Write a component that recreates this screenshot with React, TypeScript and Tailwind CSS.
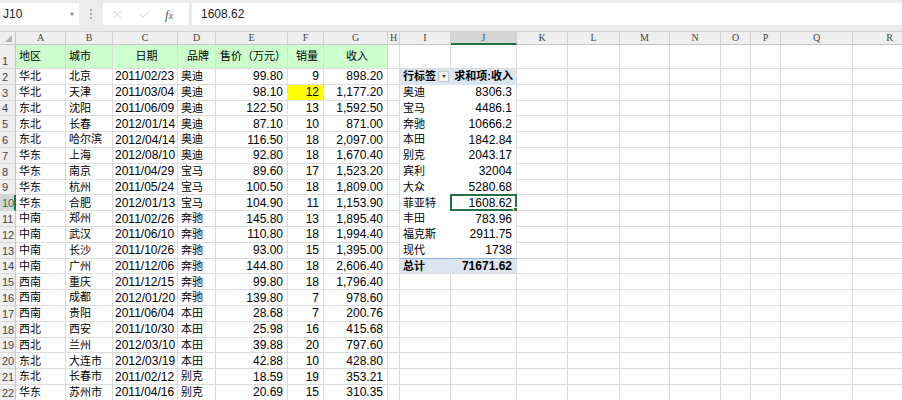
import React from 'react';
import { X, Check } from 'lucide-react';

const COLS = [16, 50, 47, 65, 38, 72, 36, 64, 12, 51, 66, 51, 52, 50, 51, 30, 30, 72, 74];
const LETTERS = ['', 'A', 'B', 'C', 'D', 'E', 'F', 'G', 'H', 'I', 'J', 'K', 'L', 'M', 'N', 'O', 'P', 'Q', 'R'];

const DATA: [string, string, string, string, string, string, string][] = [
    ['华北', '北京', '2011/02/23', '奥迪', '99.80', '9', '898.20'],
    ['华北', '天津', '2011/03/04', '奥迪', '98.10', '12', '1,177.20'],
    ['东北', '沈阳', '2011/06/09', '奥迪', '122.50', '13', '1,592.50'],
    ['东北', '长春', '2012/01/14', '奥迪', '87.10', '10', '871.00'],
    ['东北', '哈尔滨', '2012/04/14', '奥迪', '116.50', '18', '2,097.00'],
    ['华东', '上海', '2012/08/10', '奥迪', '92.80', '18', '1,670.40'],
    ['华东', '南京', '2011/04/29', '宝马', '89.60', '17', '1,523.20'],
    ['华东', '杭州', '2011/05/24', '宝马', '100.50', '18', '1,809.00'],
    ['华东', '合肥', '2012/01/13', '宝马', '104.90', '11', '1,153.90'],
    ['中南', '郑州', '2011/02/26', '奔驰', '145.80', '13', '1,895.40'],
    ['中南', '武汉', '2011/06/10', '奔驰', '110.80', '18', '1,994.40'],
    ['中南', '长沙', '2011/10/26', '奔驰', '93.00', '15', '1,395.00'],
    ['中南', '广州', '2011/12/06', '奔驰', '144.80', '18', '2,606.40'],
    ['西南', '重庆', '2011/12/15', '奔驰', '99.80', '18', '1,796.40'],
    ['西南', '成都', '2012/01/20', '奔驰', '139.80', '7', '978.60'],
    ['西南', '贵阳', '2011/06/04', '本田', '28.68', '7', '200.76'],
    ['西北', '西安', '2011/10/30', '本田', '25.98', '16', '415.68'],
    ['西北', '兰州', '2012/03/10', '本田', '39.88', '20', '797.60'],
    ['东北', '大连市', '2012/03/19', '本田', '42.88', '10', '428.80'],
    ['东北', '长春市', '2011/02/12', '别克', '18.59', '19', '353.21'],
    ['华东', '苏州市', '2011/04/16', '别克', '20.69', '15', '310.35'],
];

const PIVOT: [string, string][] = [
    ['奥迪', '8306.3'],
    ['宝马', '4486.1'],
    ['奔驰', '10666.2'],
    ['本田', '1842.84'],
    ['别克', '2043.17'],
    ['宾利', '32004'],
    ['大众', '5280.68'],
    ['菲亚特', '1608.62'],
    ['丰田', '783.96'],
    ['福克斯', '2911.75'],
    ['现代', '1738'],
];

const HEADERS = ['地区', '城市', '日期', '品牌', '售价（万元）', '销量', '收入'];
const HEADER_ALIGN = ['left', 'left', 'center', 'center', 'center', 'center', 'center'];

type CellProps = {
    width: number;
    children?: React.ReactNode;
    className?: string;
};

const Cell: React.FC<CellProps> = ({ width, children, className = '' }) => (
    <div
        style={{ width }}
        className={`relative shrink-0 h-full flex items-center overflow-visible whitespace-nowrap border-r border-b border-[#dcdcdc] ${className}`}
    >
        {children}
    </div>
);

const cjk = 'text-[11px]';
const num = 'text-[12px] justify-end pr-[4px]';

function renderDataCell(row: number, col: number, w: number) {
    // col 1..7 -> A..G
    if (row === 1) {
        const align = HEADER_ALIGN[col - 1];
        return (
            <Cell
                key={col}
                width={w}
                className={`bg-[#ccffcc] ${cjk} pl-[3px] ${align === 'center' ? 'justify-center' : ''}`}
            >
                {HEADERS[col - 1]}
            </Cell>
        );
    }
    const d = DATA[row - 2];
    const v = d[col - 1];
    if (col === 1 || col === 2 || col === 4) {
        return (
            <Cell key={col} width={w} className={`${cjk} pl-[3px]`}>
                {v}
            </Cell>
        );
    }
    if (col === 3) {
        return (
            <Cell key={col} width={w} className="text-[12px] pl-[2px]">
                {v}
            </Cell>
        );
    }
    const yellow = row === 3 && col === 6 ? 'bg-[#ffff00]' : '';
    return (
        <Cell key={col} width={w} className={`${num} ${yellow}`}>
            {v}
        </Cell>
    );
}

function renderPivotCell(row: number, col: number, w: number) {
    // col 9 = I, col 10 = J
    const isI = col === 9;
    if (row === 2) {
        return (
            <Cell
                key={col}
                width={w}
                className={`bg-[#dce6f1] font-bold border-b-[#dce6f1] ${isI ? 'border-r-[#dce6f1] ' + cjk + ' pl-[3px]' : cjk + ' justify-end pr-[3px]'}`}
            >
                {isI ? (
                    <>
                        <span>行标签</span>
                        <span className="absolute right-[1px] top-[2px] w-[11px] h-[11px] bg-[#f4f4f4] border border-[#c8c8c8] flex items-center justify-center">
                            <span className="w-0 h-0 border-l-[2.5px] border-r-[2.5px] border-t-[3px] border-l-transparent border-r-transparent border-t-[#444]" />
                        </span>
                    </>
                ) : (
                    '求和项:收入'
                )}
            </Cell>
        );
    }
    if (row >= 3 && row <= 13) {
        const p = PIVOT[row - 3];
        const last = row === 13;
        return (
            <Cell
                key={col}
                width={w}
                className={`${last ? 'border-b-[#95b3d7]' : 'border-b-white'} ${isI ? 'border-r-white ' + cjk + ' pl-[3px]' : num + ' pr-[3px]'}`}
            >
                {isI ? p[0] : p[1]}
                {row === 10 && !isI && (
                    <span className="absolute -left-[1px] -top-[1px] -right-[1px] -bottom-[1px] border-2 border-[#217346] pointer-events-none">
                        <span className="absolute -right-[3px] -bottom-[3px] w-[5px] h-[5px] bg-[#217346] border border-white" />
                    </span>
                )}
            </Cell>
        );
    }
    if (row === 14) {
        return (
            <Cell
                key={col}
                width={w}
                className={`bg-[#dce6f1] font-bold ${isI ? 'border-r-[#dce6f1] ' + cjk + ' pl-[3px]' : num + ' pr-[3px]'}`}
            >
                {isI ? '总计' : '71671.62'}
            </Cell>
        );
    }
    return <Cell key={col} width={w} />;
}

const Row: React.FC<{ row: number }> = ({ row }) => {
    const h = row === 1 ? 'h-[24px]' : 'h-[15.8px]';
    const selected = row === 10;
    return (
        <div className={`flex ${h}`}>
            {COLS.map((w, c) => {
                if (c === 0) {
                    return (
                        <div
                            key={c}
                            style={{ width: w }}
                            className={`shrink-0 h-full flex items-end pb-[1px] pl-[2px] text-[11px] leading-none border-b border-[#d8d8d8] ${
                                selected
                                    ? 'bg-[#d6d6d6] text-[#217346] border-r-2 border-r-[#217346]'
                                    : 'bg-[#efefef] text-[#444] border-r border-r-[#c6c6c6]'
                            }`}
                        >
                            {row}
                        </div>
                    );
                }
                if (c >= 1 && c <= 7) return renderDataCell(row, c, w);
                if ((c === 9 || c === 10) && row >= 2 && row <= 14) return renderPivotCell(row, c, w);
                return <Cell key={c} width={w} />;
            })}
        </div>
    );
};

const App: React.FC = () => {
    const rows = Array.from({ length: 22 }, (_, i) => i + 1);
    return (
        <div
            className="w-[902px] h-[400px] overflow-hidden bg-white text-black"
            style={{ fontFamily: '"Liberation Sans", "Noto Sans CJK SC", sans-serif' }}
        >
            {/* formula bar */}
            <div className="h-[32px] bg-[#ececec] flex items-start pt-[3px] gap-0 border-b border-[#d4d4d4]">
                <div className="w-[79px] h-[22px] bg-white flex items-center justify-between pl-[3px] pr-[5px] text-[12px] text-[#222]">
                    <span>J10</span>
                    <span className="w-0 h-0 border-l-[2.5px] border-r-[2.5px] border-t-[3px] border-l-transparent border-r-transparent border-t-[#777]" />
                </div>
                <div className="w-[24px] h-[22px] flex flex-col items-center justify-center gap-[2px]">
                    <span className="w-[2px] h-[2px] bg-[#aaa]" />
                    <span className="w-[2px] h-[2px] bg-[#aaa]" />
                    <span className="w-[2px] h-[2px] bg-[#aaa]" />
                </div>
                <div className="w-[86px] h-[22px] bg-white flex items-center pl-[8px] gap-[14px] text-[#b8b8b8]">
                    <X size={13} strokeWidth={1.2} />
                    <Check size={13} strokeWidth={1.2} />
                    <span
                        className="italic text-[13px] text-[#555] leading-none"
                        style={{ fontFamily: '"Liberation Serif", serif' }}
                    >
                        f<span className="text-[10px]">x</span>
                    </span>
                </div>
                <div className="ml-[3px] flex-1 h-[22px] bg-white flex items-center pl-[9px] text-[12px] text-[#222]">
                    1608.62
                </div>
            </div>

            {/* column headers */}
            <div className="flex h-[13px]">
                {COLS.map((w, c) => {
                    if (c === 0) {
                        return (
                            <div
                                key={c}
                                style={{ width: w }}
                                className="relative shrink-0 h-full bg-[#efefef] border-r border-b border-[#c6c6c6]"
                            >
                                <span className="absolute right-[3px] bottom-[2px] w-0 h-0 border-l-[7px] border-t-[7px] border-l-transparent border-t-transparent border-b-0 border-r-0 border-[#b4b4b4] [border-bottom:7px_solid_#b4b4b4]" />
                            </div>
                        );
                    }
                    const sel = c === 10;
                    return (
                        <div
                            key={c}
                            style={{ width: w, fontFamily: '"Liberation Serif", serif' }}
                            className={`shrink-0 h-full flex items-center justify-center text-[10px] leading-none border-r border-r-[#d0d0d0] ${
                                sel
                                    ? 'bg-[#d6d6d6] text-[#217346] border-b-2 border-b-[#217346]'
                                    : 'bg-[#efefef] text-[#444] border-b border-b-[#c6c6c6]'
                            }`}
                        >
                            {LETTERS[c]}
                        </div>
                    );
                })}
            </div>

            {rows.map(r => (
                <Row key={r} row={r} />
            ))}
        </div>
    );
};

export default App;
